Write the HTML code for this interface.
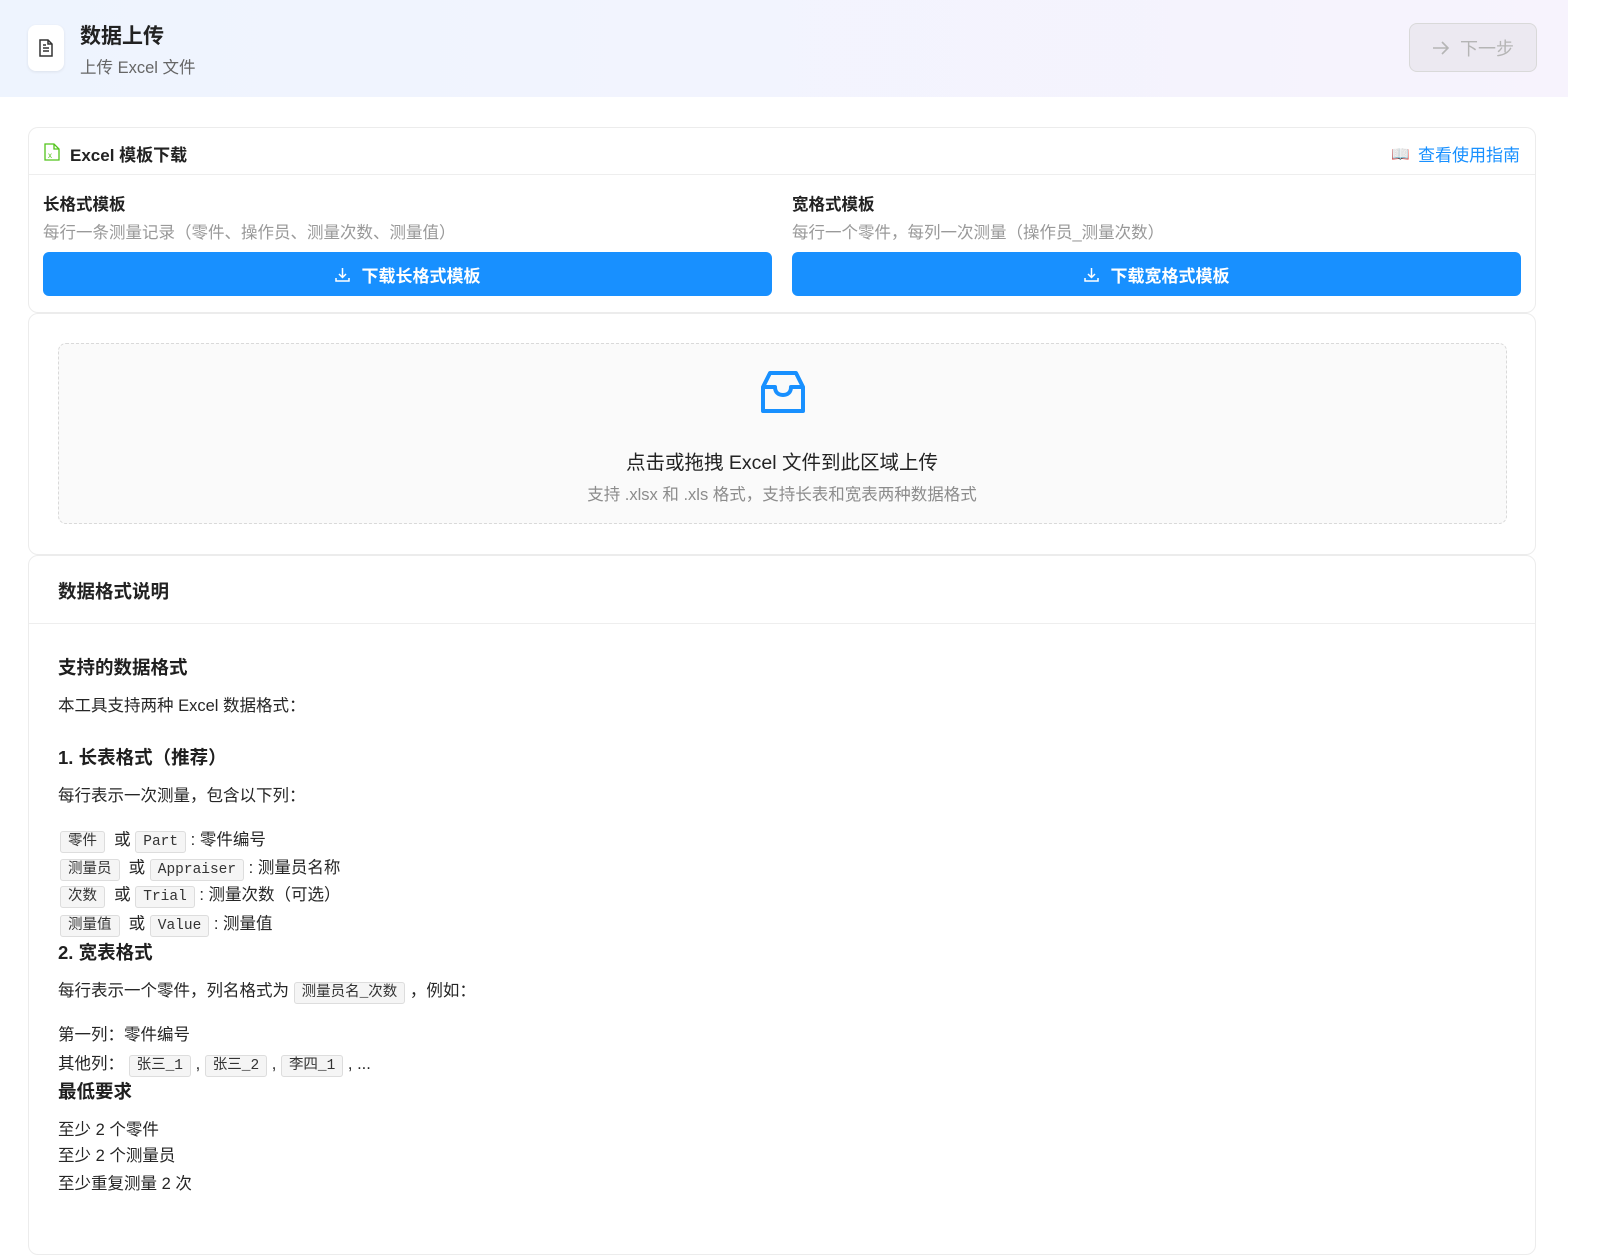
<!DOCTYPE html>
<html><head><meta charset="utf-8"><style>
*{margin:0;padding:0;box-sizing:border-box}
body{width:1598px;height:1241px;overflow:hidden;background:#fff;font-family:"Liberation Sans","Noto Sans CJK SC",sans-serif;color:#1f1f1f;position:relative}
.a{position:absolute;white-space:nowrap}
.hdr{position:absolute;left:0;top:0;width:1568px;height:97px;background:linear-gradient(90deg,#eef4fe,#f7f3fd)}
.card{position:absolute;left:28px;width:1508px;border:1px solid #ececec;border-radius:10px;background:#fff}
.btn{position:absolute;top:252px;height:44px;width:729px;background:#1890ff;border-radius:6px;color:#fff;font-size:17px;font-weight:bold;display:flex;align-items:center;justify-content:center;gap:12px}
code{font-family:"Liberation Mono","Noto Sans CJK SC",monospace;font-size:14.5px;background:#f5f5f5;border:1px solid #ddd;border-radius:3px;padding:2px 7px;color:#333}
.t{font-size:16.5px;color:#262626;line-height:24px}
.h{font-size:18.5px;font-weight:bold;line-height:26px;color:#1f1f1f}
</style></head><body>
<div class="hdr">
 <div class="a" style="left:28px;top:25px;width:36px;height:46px;background:#fff;border-radius:8px;box-shadow:0 1px 3px rgba(0,0,0,.08);display:flex;align-items:center;justify-content:center">
  <svg width="16" height="18" viewBox="0 0 16 18" fill="none" stroke="#333" stroke-width="1.5"><path d="M2 1h8l4 4v12H2z"/><path d="M10 1v4h4M5 9h6M5 12h6M5 6h3"/></svg>
 </div>
 <div class="a" style="left:80px;top:20px;font-size:21px;font-weight:bold;color:#222">数据上传</div>
 <div class="a" style="left:80px;top:54px;font-size:16.5px;color:#666">上传 Excel 文件</div>
 <div class="a" style="left:1409px;top:23px;width:128px;height:49px;border:1px solid #d9d9d9;border-radius:8px;background:#ece9f1;color:#b5b5b5;font-size:18px;display:flex;align-items:center;justify-content:center;gap:10px">
  <svg width="18" height="16" viewBox="0 0 18 16" fill="none" stroke="#b5b5b5" stroke-width="1.6"><path d="M1 8h15M10 2l6 6-6 6"/></svg>下一步</div>
</div>

<div class="card" style="top:127px;height:186px">
 <div class="a" style="left:15px;top:15px"><svg width="16" height="18" viewBox="0 0 16 18" fill="none" stroke="#52c41a" stroke-width="1.3"><path d="M1 1h9l5 5v11H1z"/><path d="M10 1v5h5"/><text x="4" y="15" font-size="8" fill="#52c41a" stroke="none" font-family="Liberation Sans">x</text></svg></div>
 <div class="a" style="left:41px;top:13px;font-size:17px;font-weight:bold;color:#222">Excel 模板下载</div>
 <div class="a" style="right:15px;top:13px;font-size:17px;color:#1890ff;display:flex;align-items:center;gap:8px"><span style="font-size:15px">📖</span>查看使用指南</div>
 <div class="a" style="left:0;top:46px;width:1506px;border-top:1px solid #eee"></div>
 <div class="a" style="left:14px;top:63px;font-size:16.5px;font-weight:bold;color:#222">长格式模板</div>
 <div class="a" style="left:14px;top:91px;font-size:16.5px;color:#999">每行一条测量记录（零件、操作员、测量次数、测量值）</div>
 <div class="a" style="left:763px;top:63px;font-size:16.5px;font-weight:bold;color:#222">宽格式模板</div>
 <div class="a" style="left:763px;top:91px;font-size:16.5px;color:#999">每行一个零件，每列一次测量（操作员_测量次数）</div>
</div>
<div class="btn" style="left:43px"><svg width="15" height="15" viewBox="0 0 15 15" fill="none" stroke="#fff" stroke-width="1.5"><path d="M7.5 1v9M4 7l3.5 3.5L11 7M1 11v3h13v-3"/></svg>下载长格式模板</div>
<div class="btn" style="left:792px"><svg width="15" height="15" viewBox="0 0 15 15" fill="none" stroke="#fff" stroke-width="1.5"><path d="M7.5 1v9M4 7l3.5 3.5L11 7M1 11v3h13v-3"/></svg>下载宽格式模板</div>

<div class="card" style="top:313px;height:242px">
 <div class="a" style="left:29px;top:29px;width:1449px;height:181px;border:1px dashed #d9d9d9;border-radius:8px;background:#fafafa"></div>
 <div class="a" style="left:732px;top:57px"><svg width="44" height="44" viewBox="0 0 44 44" fill="none" stroke="#1890ff" stroke-width="4" stroke-linejoin="round"><path d="M9 2h26l7 14v24H2V16z"/><path d="M2 16h12c0 5 3 8 8 8s8-3 8-8h12"/></svg></div>
 <div class="a" style="left:0;width:1506px;text-align:center;top:132px;font-size:19.5px;color:#222">点击或拖拽 Excel 文件到此区域上传</div>
 <div class="a" style="left:0;width:1506px;text-align:center;top:167px;font-size:16.5px;color:#8c8c8c">支持 .xlsx 和 .xls 格式，支持长表和宽表两种数据格式</div>
</div>

<div class="card" style="top:555px;height:700px">
 <div class="a" style="left:29px;top:22px;font-size:18.5px;font-weight:bold;color:#222">数据格式说明</div>
 <div class="a" style="left:0;top:67px;width:1506px;border-top:1px solid #eee"></div>
</div>
<div class="a h" style="left:58px;top:655px">支持的数据格式</div>
<div class="a t" style="left:58px;top:694px">本工具支持两种 Excel 数据格式：</div>
<div class="a h" style="left:58px;top:745px">1. 长表格式（推荐）</div>
<div class="a t" style="left:58px;top:784px">每行表示一次测量，包含以下列：</div>
<div class="a t" style="left:60px;top:828px"><code>零件</code> &nbsp;或 <code>Part</code> : 零件编号</div>
<div class="a t" style="left:60px;top:856px"><code>测量员</code> &nbsp;或 <code>Appraiser</code> : 测量员名称</div>
<div class="a t" style="left:60px;top:883px"><code>次数</code> &nbsp;或 <code>Trial</code> : 测量次数（可选）</div>
<div class="a t" style="left:60px;top:912px"><code>测量值</code> &nbsp;或 <code>Value</code> : 测量值</div>
<div class="a h" style="left:58px;top:940px">2. 宽表格式</div>
<div class="a t" style="left:58px;top:979px">每行表示一个零件，列名格式为 <code>测量员名_次数</code> ，例如：</div>
<div class="a t" style="left:58px;top:1023px">第一列：零件编号</div>
<div class="a t" style="left:58px;top:1052px">其他列： <code>张三_1</code> , <code>张三_2</code> , <code>李四_1</code> , ...</div>
<div class="a h" style="left:58px;top:1079px">最低要求</div>
<div class="a t" style="left:58px;top:1118px">至少 2 个零件</div>
<div class="a t" style="left:58px;top:1144px">至少 2 个测量员</div>
<div class="a t" style="left:58px;top:1172px">至少重复测量 2 次</div>
</body></html>
